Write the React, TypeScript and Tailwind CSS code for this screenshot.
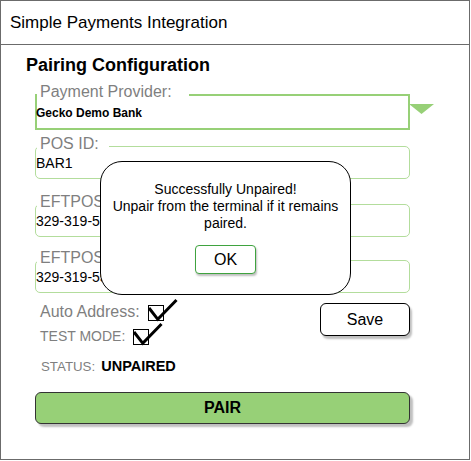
import React from "react";

const font = "font-['Liberation_Sans',Arial,Helvetica,sans-serif]";

function CheckMark() {
  return (
    <svg width="31" height="24" viewBox="0 0 31 24" className="shrink-0">
      <rect x="1.5" y="7.5" width="15" height="15" fill="white" stroke="#000" strokeWidth="1" />
      <path d="M2 10 L10.8 21.3 L29.5 2" fill="none" stroke="#000" strokeWidth="3" strokeLinejoin="miter" />
    </svg>
  );
}

function Field({
  label,
  value,
  className,
}: {
  label: string;
  value: string;
  className: string;
}) {
  return (
    <div
      className={`relative ml-[34px] h-[33px] w-[375px] rounded-[5px] border border-[#b3dd9c] bg-white pt-[8px] text-[14px] leading-[16px] text-black ${className}`}
    >
      <span className="absolute left-[1px] top-[-12px] whitespace-nowrap bg-white pl-[3px] pr-[10px] text-[16px] leading-[18px] text-[#7f7f7f]">
        {label}
      </span>
      <span className="whitespace-nowrap">{value}</span>
    </div>
  );
}

export default function App() {
  return (
    <div className={`h-[461px] w-[471px] bg-white ${font}`}>
      <div className="relative flex h-[460px] w-[470px] flex-col border border-[#6b6b6b] bg-white">
        <div className="flex h-[44px] shrink-0 items-center border-b border-[#6b6b6b] pl-[9px] text-[17px] text-black">
          Simple Payments Integration
        </div>

        <h2 className="ml-[25px] mt-[10px] text-[18px] font-bold leading-[20px] text-black">
          Pairing Configuration
        </h2>

        <div className="mt-[19px] flex items-start">
          <div className="relative ml-[34px] h-[36px] w-[375px] border-2 border-[#97d077] bg-white pt-[10px] text-[12px] font-bold leading-[14px] text-black">
            <span className="absolute left-0 top-[-13px] whitespace-nowrap bg-white pl-[3px] pr-[17px] text-[16px] font-normal leading-[18px] text-[#7f7f7f]">
              Payment Provider:
            </span>
            <span className="-ml-[1px]">Gecko Demo Bank</span>
          </div>
          <svg width="25" height="10" viewBox="0 0 25 10" className="-ml-[1px] mt-[10px]">
            <polygon points="0,0 25,0 12.5,10" fill="#97d077" />
          </svg>
        </div>

        <Field label="POS ID:" value="BAR1" className="mt-[16px]" />
        <Field label="EFTPOS" value="329-319-551" className="mt-[25px]" />
        <Field label="EFTPOS" value="329-319-551" className="mt-[23px]" />

        <div className="ml-[34px] mt-[5px] flex w-[375px] items-start justify-between">
          <div className="flex flex-col pl-[5px]">
            <div className="flex h-[24px] items-start">
              <span className="mt-[5px] text-[16px] leading-[18px] text-[#7f7f7f]">Auto Address:</span>
              <div className="ml-[7px]">
                <CheckMark />
              </div>
            </div>
            <div className="flex h-[24px] items-start">
              <span className="mt-[6px] text-[14px] leading-[16px] text-[#7f7f7f]">TEST MODE:</span>
              <div className="ml-[7px]">
                <CheckMark />
              </div>
            </div>
          </div>
          <button className="mt-[5px] h-[33px] w-[90px] rounded-[6px] border border-black bg-white text-[16px] text-black shadow-[2px_3px_2px_rgba(0,0,0,0.25)]">
            Save
          </button>
        </div>

        <div className="ml-[34px] mt-[12px] flex items-baseline gap-[6px] pl-[6px] leading-[16px]">
          <span className="text-[13.3px] text-[#7f7f7f]">STATUS:</span>
          <span className="text-[14.5px] font-bold text-black">UNPAIRED</span>
        </div>

        <button className="ml-[34px] mt-[17px] h-[32px] w-[375px] rounded-[6px] border border-[#333] bg-[#97d077] text-[16px] font-bold text-black shadow-[3px_3px_2px_rgba(0,0,0,0.25)]">
          PAIR
        </button>

        <div className="absolute left-[99px] top-[160px] z-10 flex h-[134px] w-[251px] flex-col items-center rounded-[22px] border border-black bg-white px-[10px] pt-[19px] text-center text-[14px] leading-[17px] text-black">
          <div>Successfully Unpaired!</div>
          <div>Unpair from the terminal if it remains paired.</div>
          <button className="mt-[13px] h-[29px] w-[61px] rounded-[4px] border border-[#3fa33f] bg-white text-[16px] text-black shadow-[1px_2px_2px_rgba(0,0,0,0.25)]">
            OK
          </button>
        </div>
      </div>
    </div>
  );
}
